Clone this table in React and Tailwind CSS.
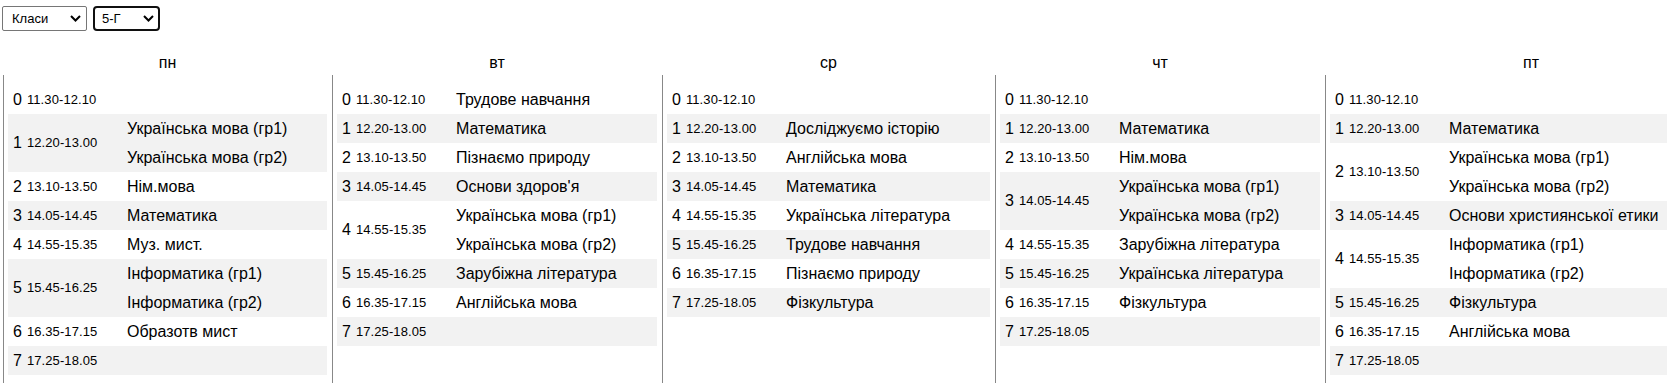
import React from "react";

const times = [
  "11.30-12.10",
  "12.20-13.00",
  "13.10-13.50",
  "14.05-14.45",
  "14.55-15.35",
  "15.45-16.25",
  "16.35-17.15",
  "17.25-18.05",
];

const uk = ["Українська мова (гр1)", "Українська мова (гр2)"];
const inf = ["Інформатика (гр1)", "Інформатика (гр2)"];

const days = [
  {
    name: "пн",
    w: "w-[329px]",
    lessons: [[], uk, ["Нім.мова"], ["Математика"], ["Муз. мист."], inf, ["Образотв мист"], []],
  },
  {
    name: "вт",
    w: "w-[330px]",
    lessons: [
      ["Трудове навчання"],
      ["Математика"],
      ["Пізнаємо природу"],
      ["Основи здоров'я"],
      uk,
      ["Зарубіжна література"],
      ["Англійська мова"],
      [],
    ],
  },
  {
    name: "ср",
    w: "w-[333px]",
    lessons: [
      [],
      ["Досліджуємо історію"],
      ["Англійська мова"],
      ["Математика"],
      ["Українська література"],
      ["Трудове навчання"],
      ["Пізнаємо природу"],
      ["Фізкультура"],
    ],
  },
  {
    name: "чт",
    w: "w-[330px]",
    lessons: [
      [],
      ["Математика"],
      ["Нім.мова"],
      uk,
      ["Зарубіжна література"],
      ["Українська література"],
      ["Фізкультура"],
      [],
    ],
  },
  {
    name: "пт",
    w: "w-[412px]",
    lessons: [
      [],
      ["Математика"],
      uk,
      ["Основи християнської етики"],
      inf,
      ["Фізкультура"],
      ["Англійська мова"],
      [],
    ],
  },
];

function Chevron() {
  return (
    <svg width="11" height="7" viewBox="0 0 11 7" className="shrink-0">
      <path d="M1 1 L5.5 5.5 L10 1" fill="none" stroke="#000" strokeWidth="2" />
    </svg>
  );
}

function Row({ i, subjects }) {
  const grey = i % 2 === 1;
  return (
    <div className={`grid grid-cols-[119px_1fr] ${grey ? "bg-[#f2f2f2]" : "bg-white"}`}>
      <div className="flex items-center pl-[5px] whitespace-nowrap">
        <span className="text-[16px]">{i}</span>
        <span className="text-[13px] ml-[5px] tracking-[0.1px]">{times[i]}</span>
      </div>
      <div className="flex flex-col">
        {subjects.length === 0 ? (
          <div className="h-[29px]" />
        ) : (
          subjects.map((s, k) => (
            <div key={k} className="h-[29px] leading-[29px] text-[16px] whitespace-nowrap">
              {s}
            </div>
          ))
        )}
      </div>
    </div>
  );
}

export default function App() {
  return (
    <div
      className="w-[1667px] h-[383px] overflow-hidden bg-white text-black"
      style={{ fontFamily: '"Liberation Sans", Arial, sans-serif' }}
    >
      <div className="flex gap-[6px] pt-[6px] pl-[2px] text-[13px]">
        <div className="w-[85px] h-[25px] border border-[#767676] rounded-[2px] flex items-center justify-between pl-[9px] pr-[5px]">
          <span>Класи</span>
          <Chevron />
        </div>
        <div className="w-[67px] h-[25px] border-2 border-[#101010] rounded-[4px] flex items-center justify-between pl-[7px] pr-[4px]">
          <span>5-Г</span>
          <Chevron />
        </div>
      </div>
      <div className="flex items-stretch pl-[3px] mt-[19px] w-max">
        {days.map((d) => (
          <div key={d.name} className={`${d.w} shrink-0 flex flex-col`}>
            <div className="h-[25px] leading-[25px] text-center text-[16px]">{d.name}</div>
            <div className="flex-1 border-l border-[#888] pt-[10px] pb-[20px] pl-[4px] pr-[5px]">
              {d.lessons.map((s, i) => (
                <Row key={i} i={i} subjects={s} />
              ))}
            </div>
          </div>
        ))}
      </div>
    </div>
  );
}
